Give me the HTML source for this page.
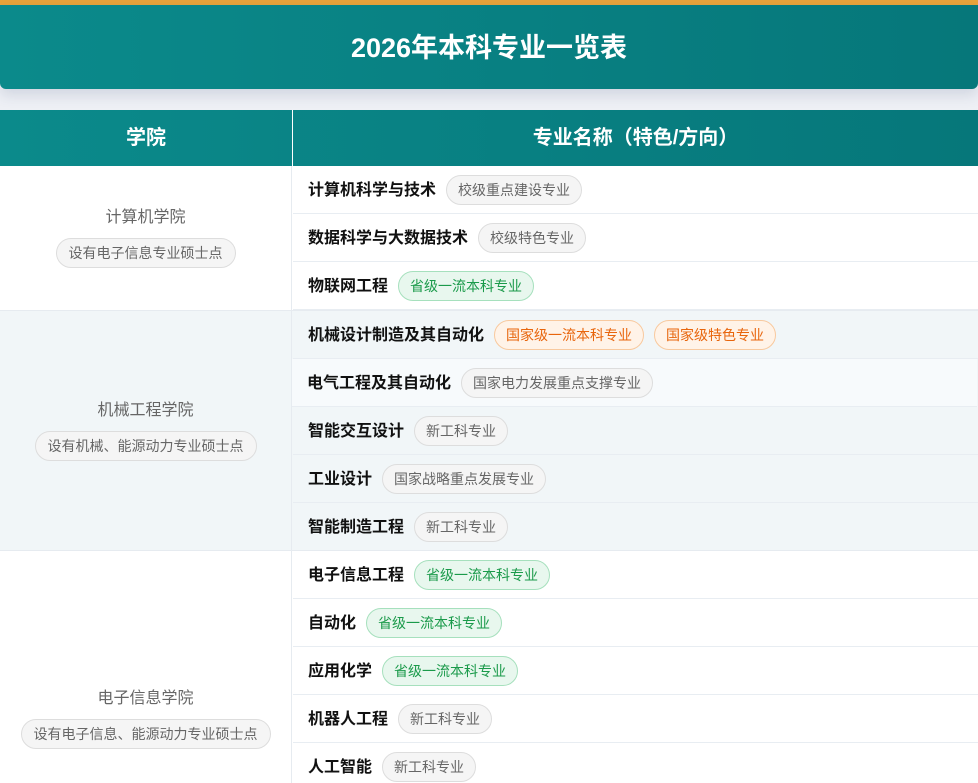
<!DOCTYPE html>
<html><head><meta charset="utf-8"><style>
*{margin:0;padding:0;box-sizing:border-box}
html,body{width:978px;height:783px;overflow:hidden;background:#eef0f5;font-family:"Liberation Sans","Noto Sans CJK SC",sans-serif}
.topbar{position:absolute;left:0;top:0;width:978px;height:5px;background:#e8a33a}
.hdr{position:absolute;left:0;top:5px;width:978px;height:84px;background:linear-gradient(90deg,#0b8a8b,#06777a);border-radius:0 0 6px 6px;box-shadow:0 6px 14px rgba(40,60,110,.15);color:#fff;font-weight:bold;font-size:27px;text-align:center;line-height:86px}
.tbl{position:absolute;left:0;top:110px;width:978px;height:673px;background:#fff;overflow:hidden}
.thbar{position:absolute;left:0;top:0;width:978px;height:56px;background:linear-gradient(90deg,#0b8a8b,#06777a)}
.th{position:absolute;top:0;height:56px;color:#fff;font-weight:bold;font-size:20px;line-height:56px;text-align:center}
.grp{position:absolute;left:0;width:978px;overflow:hidden}
.col{position:absolute;left:0;top:0;width:292px;height:100%;display:flex;flex-direction:column;align-items:center;justify-content:center;border-right:1px solid #e6ebf0}
.cname{font-size:16px;color:#666;margin-bottom:10px;line-height:20px}
.ctag{font-size:14px;color:#666;background:#f5f5f5;border:1px solid #ddd;border-radius:15px;height:30px;line-height:28px;padding:0 12px}
.row{position:absolute;left:293px;width:685px;height:48px;border-bottom:1px solid #e8edf2;display:flex;align-items:center;padding-left:15px}
.nm{font-size:16px;font-weight:bold;color:#111;margin-right:10px;line-height:20px;margin-top:3px}
.tag{font-size:14px;height:30px;line-height:28px;border-radius:15px;padding:0 11px;border:1px solid #ddd;background:#f5f5f5;color:#666;margin-right:10px}
.g{background:#e8f7ee;border-color:#a6e0bd;color:#1a9a4a}
.o{background:#fff3e8;border-color:#f8c99e;color:#e8650c}
</style></head><body>
<div class="topbar"></div>
<div class="hdr">2026年本科专业一览表</div>
<div class="tbl">
<div class="thbar"></div>
<div style="position:absolute;left:292px;top:0;width:1px;height:56px;background:#fff"></div>
<div class="th" style="left:0;width:292px">学院</div>
<div class="th" style="left:293px;width:685px">专业名称（特色/方向）</div>

<div class="grp" style="top:56px;height:144px;background:#fff">
<div class="col"><div class="cname">计算机学院</div><div class="ctag">设有电子信息专业硕士点</div></div>
<div class="row" style="top:0"><span class="nm">计算机科学与技术</span><span class="tag">校级重点建设专业</span></div>
<div class="row" style="top:48px"><span class="nm">数据科学与大数据技术</span><span class="tag">校级特色专业</span></div>
<div class="row" style="top:96px"><span class="nm">物联网工程</span><span class="tag g">省级一流本科专业</span></div>
</div>

<div class="grp" style="top:200px;height:240px;background:#f1f6f8;border-top:1px solid #e6ebf0">
<div class="col"><div class="cname">机械工程学院</div><div class="ctag">设有机械、能源动力专业硕士点</div></div>
<div class="row" style="top:0"><span class="nm">机械设计制造及其自动化</span><span class="tag o">国家级一流本科专业</span><span class="tag o">国家级特色专业</span></div>
<div class="row" style="top:48px;left:292px;background:#f7fafc"><span class="nm">电气工程及其自动化</span><span class="tag">国家电力发展重点支撑专业</span></div>
<div class="row" style="top:96px"><span class="nm">智能交互设计</span><span class="tag">新工科专业</span></div>
<div class="row" style="top:144px"><span class="nm">工业设计</span><span class="tag">国家战略重点发展专业</span></div>
<div class="row" style="top:192px"><span class="nm">智能制造工程</span><span class="tag">新工科专业</span></div>
</div>

<div class="grp" style="top:440px;height:233px;background:#fff;border-top:1px solid #e6ebf0">
<div class="col" style="height:336px"><div class="cname">电子信息学院</div><div class="ctag">设有电子信息、能源动力专业硕士点</div></div>
<div class="row" style="top:0"><span class="nm">电子信息工程</span><span class="tag g">省级一流本科专业</span></div>
<div class="row" style="top:48px"><span class="nm">自动化</span><span class="tag g">省级一流本科专业</span></div>
<div class="row" style="top:96px"><span class="nm">应用化学</span><span class="tag g">省级一流本科专业</span></div>
<div class="row" style="top:144px"><span class="nm">机器人工程</span><span class="tag">新工科专业</span></div>
<div class="row" style="top:192px"><span class="nm">人工智能</span><span class="tag">新工科专业</span></div>
</div>
</div>
</body></html>
